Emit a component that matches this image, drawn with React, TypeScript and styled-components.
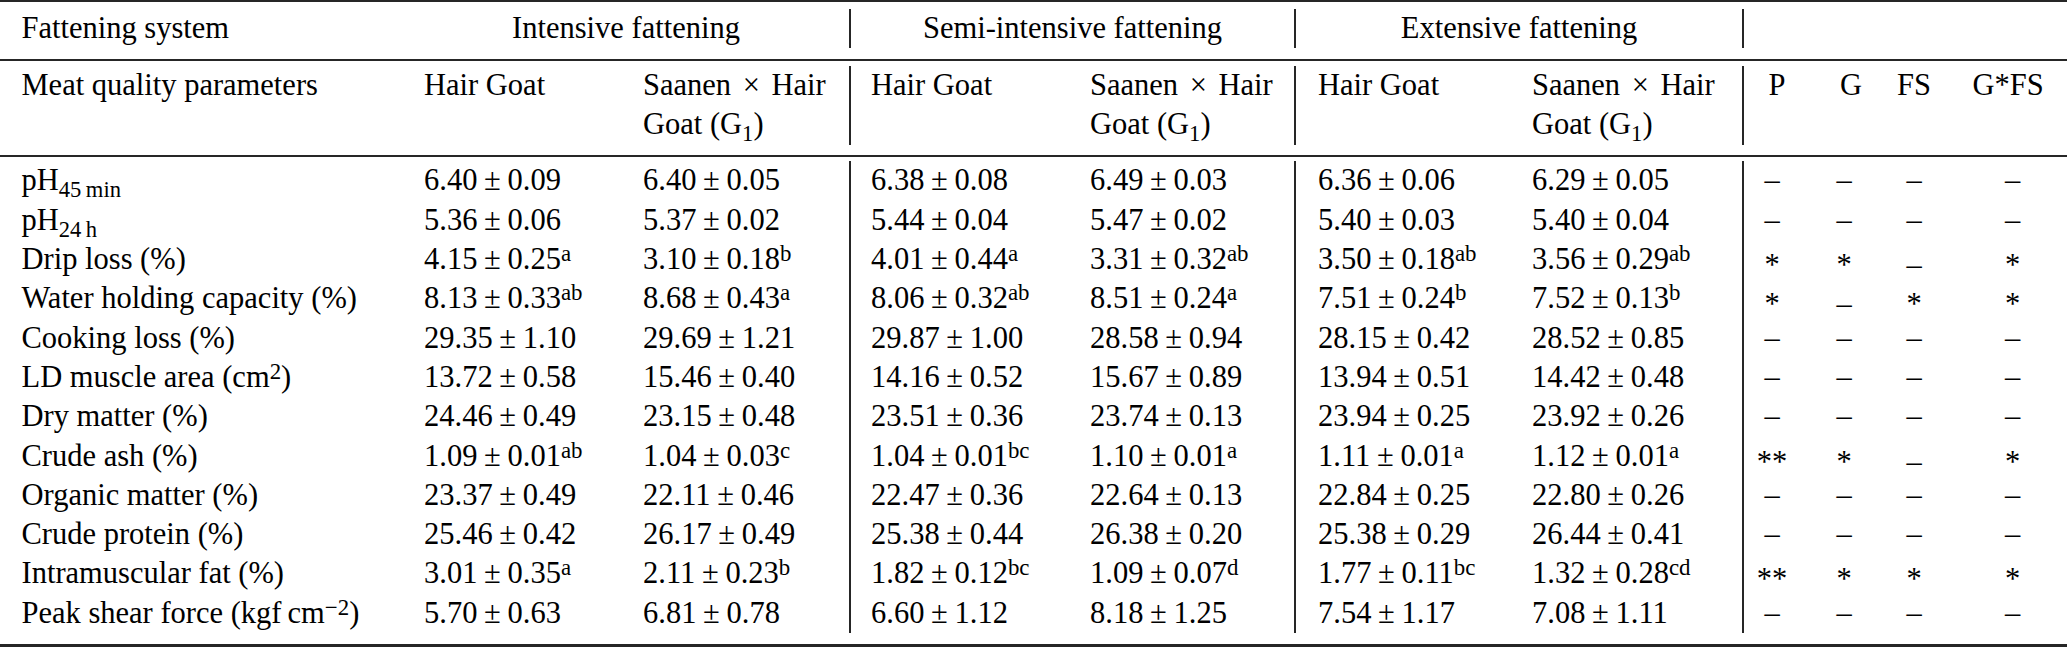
import React from "react";
import styled, { createGlobalStyle } from "styled-components";

const GlobalStyle = createGlobalStyle`
  html, body {
    margin: 0;
    padding: 0;
    background: #ffffff;
    color: #000000;
  }
`;

const SERIF = `"Liberation Serif", "Times New Roman", Times, "DejaVu Serif", serif`;

// column widths taken from the print layout
const COLS = "403px 219px 227px 220px 225px 216px 232px 58px 88px 52px 1fr";
const PADS = [21.5, 21, 21, 20, 21, 22, 22];
const SEPS = [3, 5];
const RULE = "#262626";

const Table = styled.div`
  width: 2067px;
  font-family: ${SERIF};
  font-size: 30.5px;
  line-height: 39.3px;
  color: #000;
`;

const TopHead = styled.div`
  border-top: 2px solid ${RULE};
  border-bottom: 2px solid ${RULE};
  padding: 6.5px 0 11px;
`;

const SubHead = styled.div`
  border-bottom: 2px solid ${RULE};
  padding: 5.4px 0 10px;
`;

const Body = styled.div`
  border-bottom: 3px solid ${RULE};
  padding: 4.7px 0 10.7px;
`;

const Row = styled.div<{ $lines?: number }>`
  display: grid;
  grid-template-columns: ${COLS};
  height: ${(p) => (p.$lines ?? 1) * 39.3}px;
`;

const Cell = styled.div<{ $sep?: boolean; $pad?: number; $center?: boolean; $span?: number }>`
  box-sizing: border-box;
  border-left: ${(p) => (p.$sep ? `2px solid ${RULE}` : "none")};
  padding-left: ${(p) => p.$pad ?? 0}px;
  text-align: ${(p) => (p.$center ? "center" : "left")};
  grid-column: ${(p) => (p.$span ? `span ${p.$span}` : "auto")};
  white-space: nowrap;
`;

const StatCell = styled(Cell)`
  text-align: center;
`;

const Pm = styled.span`
  margin: 0 0.22em;
`;

const Times = styled.span`
  margin: 0 0.38em;
`;

const Sup = styled.sup`
  font-size: 0.75em;
  vertical-align: 8px;
  line-height: 0;
`;

const Sub = styled.sub`
  font-size: 0.74em;
  vertical-align: -0.3em;
  line-height: 0;
`;

const Mark = styled.span<{ $low?: boolean }>`
  vertical-align: ${(p) => (p.$low ? "-6px" : "baseline")};
  line-height: 0;
`;

type Val = [string, string, string?];

type DataRow = {
  label: React.ReactNode;
  vals: Val[];
  stats: string[];
};

const rows: DataRow[] = [
  {
    label: <>pH<Sub>45&#8201;min</Sub></>,
    vals: [["6.40", "0.09"], ["6.40", "0.05"], ["6.38", "0.08"], ["6.49", "0.03"], ["6.36", "0.06"], ["6.29", "0.05"]],
    stats: ["–", "–", "–", "–"],
  },
  {
    label: <>pH<Sub>24&#8201;h</Sub></>,
    vals: [["5.36", "0.06"], ["5.37", "0.02"], ["5.44", "0.04"], ["5.47", "0.02"], ["5.40", "0.03"], ["5.40", "0.04"]],
    stats: ["–", "–", "–", "–"],
  },
  {
    label: "Drip loss (%)",
    vals: [["4.15", "0.25", "a"], ["3.10", "0.18", "b"], ["4.01", "0.44", "a"], ["3.31", "0.32", "ab"], ["3.50", "0.18", "ab"], ["3.56", "0.29", "ab"]],
    stats: ["*", "*", "–", "*"],
  },
  {
    label: "Water holding capacity (%)",
    vals: [["8.13", "0.33", "ab"], ["8.68", "0.43", "a"], ["8.06", "0.32", "ab"], ["8.51", "0.24", "a"], ["7.51", "0.24", "b"], ["7.52", "0.13", "b"]],
    stats: ["*", "–", "*", "*"],
  },
  {
    label: "Cooking loss (%)",
    vals: [["29.35", "1.10"], ["29.69", "1.21"], ["29.87", "1.00"], ["28.58", "0.94"], ["28.15", "0.42"], ["28.52", "0.85"]],
    stats: ["–", "–", "–", "–"],
  },
  {
    label: <>LD muscle area (cm<Sup>2</Sup>)</>,
    vals: [["13.72", "0.58"], ["15.46", "0.40"], ["14.16", "0.52"], ["15.67", "0.89"], ["13.94", "0.51"], ["14.42", "0.48"]],
    stats: ["–", "–", "–", "–"],
  },
  {
    label: "Dry matter (%)",
    vals: [["24.46", "0.49"], ["23.15", "0.48"], ["23.51", "0.36"], ["23.74", "0.13"], ["23.94", "0.25"], ["23.92", "0.26"]],
    stats: ["–", "–", "–", "–"],
  },
  {
    label: "Crude ash (%)",
    vals: [["1.09", "0.01", "ab"], ["1.04", "0.03", "c"], ["1.04", "0.01", "bc"], ["1.10", "0.01", "a"], ["1.11", "0.01", "a"], ["1.12", "0.01", "a"]],
    stats: ["**", "*", "–", "*"],
  },
  {
    label: "Organic matter (%)",
    vals: [["23.37", "0.49"], ["22.11", "0.46"], ["22.47", "0.36"], ["22.64", "0.13"], ["22.84", "0.25"], ["22.80", "0.26"]],
    stats: ["–", "–", "–", "–"],
  },
  {
    label: "Crude protein (%)",
    vals: [["25.46", "0.42"], ["26.17", "0.49"], ["25.38", "0.44"], ["26.38", "0.20"], ["25.38", "0.29"], ["26.44", "0.41"]],
    stats: ["–", "–", "–", "–"],
  },
  {
    label: "Intramuscular fat (%)",
    vals: [["3.01", "0.35", "a"], ["2.11", "0.23", "b"], ["1.82", "0.12", "bc"], ["1.09", "0.07", "d"], ["1.77", "0.11", "bc"], ["1.32", "0.28", "cd"]],
    stats: ["**", "*", "*", "*"],
  },
  {
    label: <>Peak shear force (kgf&#8201;cm<Sup>−2</Sup>)</>,
    vals: [["5.70", "0.63"], ["6.81", "0.78"], ["6.60", "1.12"], ["8.18", "1.25"], ["7.54", "1.17"], ["7.08", "1.11"]],
    stats: ["–", "–", "–", "–"],
  },
];

const statPads = [0, 0, 0, 18];
const statHeads: [string, number][] = [["P", 10], ["G", 14], ["FS", 0], ["G*FS", 9]];

function Value({ v }: { v: Val }) {
  return (
    <>
      {v[0]}
      <Pm>±</Pm>
      {v[1]}
      {v[2] && <Sup>{v[2]}</Sup>}
    </>
  );
}

function Cross() {
  return (
    <>
      Saanen<Times>×</Times>Hair
      <br />
      Goat (G<Sub>1</Sub>)
    </>
  );
}

export default function App() {
  return (
    <>
      <GlobalStyle />
      <Table>
        <TopHead>
          <Row>
            <Cell $pad={PADS[0]}>Fattening system</Cell>
            <Cell $span={2} $center>Intensive fattening</Cell>
            <Cell $span={2} $center $sep>Semi-intensive fattening</Cell>
            <Cell $span={2} $center $sep>Extensive fattening</Cell>
            <Cell $span={4} $sep />
          </Row>
        </TopHead>
        <SubHead>
          <Row $lines={2}>
            <Cell $pad={PADS[0]}>Meat quality parameters</Cell>
            <Cell $pad={PADS[1]}>Hair Goat</Cell>
            <Cell $pad={PADS[2]}><Cross /></Cell>
            <Cell $pad={PADS[3]} $sep>Hair Goat</Cell>
            <Cell $pad={PADS[4]}><Cross /></Cell>
            <Cell $pad={PADS[5]} $sep>Hair Goat</Cell>
            <Cell $pad={PADS[6]}><Cross /></Cell>
            {statHeads.map(([h, pad], k) => (
              <StatCell key={h} $sep={k === 0} $pad={pad}>
                {h}
              </StatCell>
            ))}
          </Row>
        </SubHead>
        <Body>
          {rows.map((r, i) => {
            const starred = r.stats.some((s) => s.includes("*"));
            return (
              <Row key={i}>
                <Cell $pad={PADS[0]}>{r.label}</Cell>
                {r.vals.map((v, j) => (
                  <Cell key={j} $pad={PADS[j + 1]} $sep={SEPS.includes(j + 1)}>
                    <Value v={v} />
                  </Cell>
                ))}
                {r.stats.map((s, k) => (
                  <StatCell key={k} $sep={k === 0} $pad={statPads[k]}>
                    <Mark $low={starred}>{s}</Mark>
                  </StatCell>
                ))}
              </Row>
            );
          })}
        </Body>
      </Table>
    </>
  );
}
